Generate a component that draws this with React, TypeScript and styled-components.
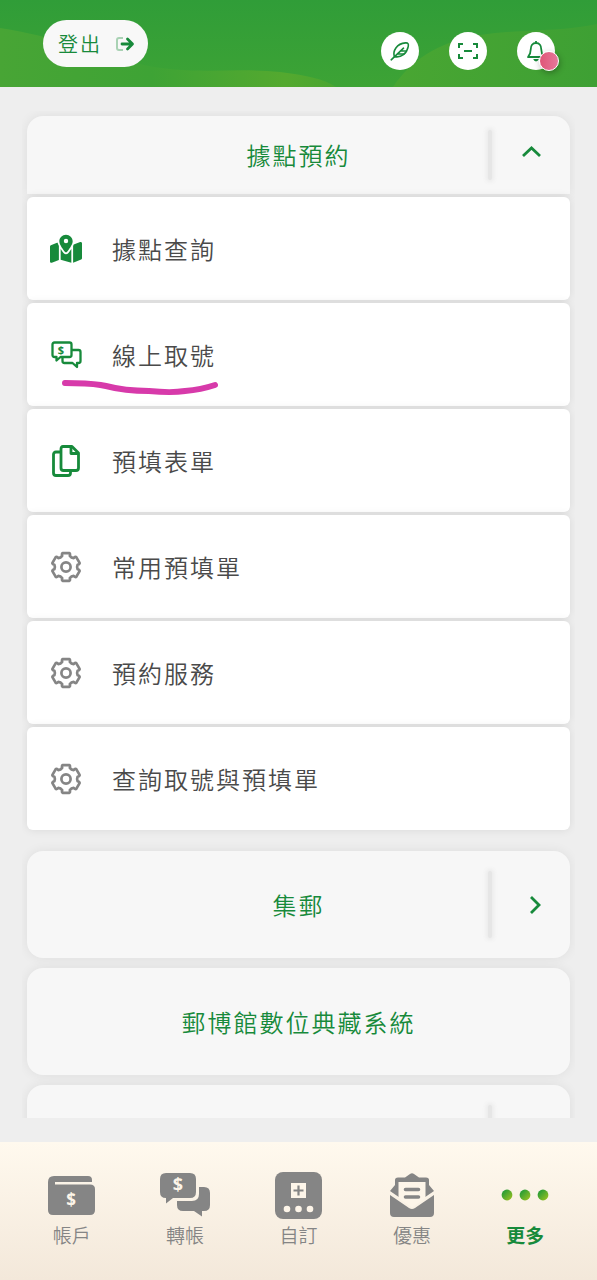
import React from "react";
import styled, { createGlobalStyle } from "styled-components";
import { FaMapLocationDot } from "react-icons/fa6";

const GREEN = "#178a3b";
const GREY = "#858585";
const CREAM = "#fdf5e9";

const GlobalStyle = createGlobalStyle`
  *, *::before, *::after { box-sizing: border-box; }
  body {
    margin: 0;
    background: #eeeeee;
    font-family: "Noto Sans CJK TC", "Noto Sans", sans-serif;
  }
  button { font: inherit; color: inherit; border: 0; padding: 0; cursor: pointer; }
  a { color: inherit; text-decoration: none; }
  ul { list-style: none; margin: 0; padding: 0; }
  svg { display: block; }
`;

const Screen = styled.div`
  display: flex;
  flex-direction: column;
  height: 100vh;
  overflow: hidden;
`;

const TopBar = styled.header`
  position: relative;
  flex: none;
  display: flex;
  justify-content: space-between;
  align-items: flex-start;
  height: 87px;
  padding: 20px 42px 0 43px;
  background: linear-gradient(#309d38, #3da335);
`;

const Waves = styled.svg`
  position: absolute;
  inset: 0;
  width: 100%;
  height: 100%;
`;

const LogoutButton = styled.button`
  position: relative;
  display: flex;
  align-items: center;
  justify-content: space-between;
  width: 105px;
  height: 47px;
  padding: 0 13px 0 15px;
  border-radius: 24px;
  background: #f8f8f8;
  color: ${GREEN};
  font-size: 20px;
  letter-spacing: 2px;
  font-weight: 350;
`;

const ActionGroup = styled.div`
  position: relative;
  display: flex;
  gap: 30px;
  padding-top: 12px;
`;

const RoundButton = styled.button`
  position: relative;
  display: grid;
  place-items: center;
  width: 38px;
  height: 38px;
  border-radius: 50%;
  background: #fff;
`;

const Badge = styled.span`
  position: absolute;
  right: -4px;
  bottom: -1px;
  width: 20px;
  height: 20px;
  border: 1px solid #fff;
  border-radius: 50%;
  background: linear-gradient(90deg, #e05577, #e5789b);
  box-shadow: 1px 2px 6px rgba(0, 0, 0, 0.3);
`;

const MenuArea = styled.main`
  flex: 1;
  min-height: 0;
  margin: 24px 22px;
  padding: 5px;
  overflow: hidden;
`;

const MenuList = styled.div`
  display: flex;
  flex-direction: column;
  gap: 10px;
`;

const Group = styled.section`
  margin-bottom: 11px;
`;

const CategoryCard = styled.button<{ $open?: boolean }>`
  display: grid;
  grid-template-columns: 80px 1fr 80px;
  align-items: center;
  width: 100%;
  height: ${(p) => (p.$open ? 78 : 107)}px;
  padding: ${(p) => (p.$open ? 12 : 18)}px 0;
  border-radius: ${(p) => (p.$open ? "16px 16px 0 0" : "16px")};
  background: #f7f7f7;
  box-shadow: 0 0 12px rgba(0, 0, 0, 0.07);
  color: ${GREEN};
  font-size: 24px;
  line-height: 36px;
  letter-spacing: 2px;
  font-weight: 350;
`;

const CardTitle = styled.span`
  grid-column: 2;
  text-align: center;
`;

const CardToggle = styled.span`
  display: grid;
  grid-template-columns: 6px 1fr;
  align-items: center;
  justify-items: center;
  align-self: stretch;
  margin-left: -3px;

  &::before {
    content: "";
    width: 4px;
    height: calc(100% - 4px);
    border-radius: 2px;
    background: #e6e6e6;
    box-shadow: 0 0 4px 2px #ebebeb;
  }
`;

const RowLink = styled.a`
  display: flex;
  align-items: center;
  gap: 30px;
  height: 103px;
  margin-top: 3px;
  padding: 0 23px;
  position: relative;
  border-radius: 6px;
  background: #fff;
  box-shadow: 0 0 10px rgba(0, 0, 0, 0.09);
  color: #4a4a4a;
  font-size: 24px;
  letter-spacing: 2px;
  font-weight: 350;
`;

const RowIcon = styled.span<{ $muted?: boolean }>`
  flex: none;
  display: grid;
  justify-items: center;
  align-items: center;
  width: 32px;
  color: ${(p) => (p.$muted ? GREY : GREEN)};
`;

const PenMark = styled.svg`
  position: absolute;
  left: 34px;
  bottom: 10px;
  width: 160px;
  height: 18px;
`;

const TabBar = styled.nav`
  flex: none;
  display: flex;
  height: 138px;
  padding: 27px 15px 0;
  background: linear-gradient(#fff9ee, #f3e8da);
`;

const Tab = styled.a<{ $active?: boolean }>`
  flex: 1;
  display: flex;
  flex-direction: column;
  align-items: center;
  color: ${(p) => (p.$active ? GREEN : GREY)};
  font-size: 19px;
  line-height: 28px;
  font-weight: ${(p) => (p.$active ? 700 : 350)};
`;

const TabIcon = styled.span`
  display: grid;
  place-items: center;
  height: 52px;
`;

const IconText = styled.text`
  font-family: "Noto Sans", sans-serif;
  font-weight: 700;
  text-anchor: middle;
`;

function HeaderWaves() {
  return (
    <Waves viewBox="0 0 597 87" preserveAspectRatio="none" aria-hidden="true">
      <defs>
        <linearGradient id="waveLeft" x1="0" y1="0" x2="1" y2="0">
          <stop offset="0" stopColor="#48a535" />
          <stop offset="0.45" stopColor="#3ea335" />
          <stop offset="0.85" stopColor="#54a92f" />
          <stop offset="1" stopColor="#4aa631" />
        </linearGradient>
        <linearGradient id="waveRight" x1="0" y1="0" x2="1" y2="0">
          <stop offset="0" stopColor="#49a632" />
          <stop offset="1" stopColor="#3ea034" />
        </linearGradient>
      </defs>
      <path d="M393 87 C410 62 436 42 480 35 C520 29 560 32 597 24 V87 Z" fill="url(#waveRight)" />
      <path d="M0 28 C50 36 100 52 140 64 C190 76 235 67 280 72 C305 75 325 79 336 87 H0 Z" fill="url(#waveLeft)" />
    </Waves>
  );
}

function LogoutIcon() {
  return (
    <svg width="20" height="16" viewBox="0 0 20 16" fill="none" aria-hidden="true">
      <path d="M8 2 H4 Q2 2 2 4 V12 Q2 14 4 14 H8" stroke="#a9d2b4" strokeWidth="2" />
      <path d="M7 8 H17 M12.5 3 L17.5 8 L12.5 13" stroke={GREEN} strokeWidth="2.8" strokeLinecap="round" strokeLinejoin="round" />
    </svg>
  );
}

function FeatherIcon() {
  return (
    <svg width="20" height="20" viewBox="0 0 20 20" fill="none" stroke={GREEN} strokeWidth="1.6" strokeLinecap="round" strokeLinejoin="round" aria-hidden="true">
      <path d="M4.3 15.6 C2.6 10 6.5 2.6 15.5 1.9 C18 1.7 18.8 2.8 18.2 5.6 C16.8 12.5 11.5 17 4.3 15.6 Z" />
      <path d="M1.2 18.8 L13.5 7.2 M7.4 13 H14 M10.6 10 H16.4" />
    </svg>
  );
}

function ScanIcon() {
  return (
    <svg width="20" height="16" viewBox="0 0 20 16" fill="none" stroke={GREEN} strokeWidth="2" aria-hidden="true">
      <path d="M1 5 V1 H5 M15 1 H19 V5 M19 11 V15 H15 M5 15 H1 V11 M6 8 H14" />
    </svg>
  );
}

function BellIcon() {
  return (
    <svg width="20" height="22" viewBox="0 0 20 22" fill="none" stroke={GREEN} strokeWidth="1.8" strokeLinejoin="round" aria-hidden="true">
      <path d="M10 3 C6.4 3 4.8 5.5 4.8 9 C4.8 13 3.8 14.8 2 17 H18 C16.2 14.8 15.2 13 15.2 9 C15.2 5.5 13.6 3 10 3 Z M10 3 V1" />
      <path d="M7.2 19 H12.8 Q12 21.4 10 21.4 Q8 21.4 7.2 19 Z" fill={GREEN} stroke="none" />
    </svg>
  );
}

function Chevron({ up }: { up?: boolean }) {
  return (
    <svg width="20" height="20" viewBox="0 0 20 20" fill="none" stroke={GREEN} strokeWidth="2.8" aria-hidden="true">
      <path d={up ? "M1 11 L9.5 3 L18 11" : "M9 2 L17 10 L9 18"} />
    </svg>
  );
}

function TicketIcon() {
  return (
    <svg width="31" height="28" viewBox="0 0 31 28" fill="none" stroke="currentColor" strokeWidth="2.3" strokeLinejoin="round" aria-hidden="true">
      <path d="M3.5 1.5 H18.5 Q20.5 1.5 20.5 3.5 V14 Q20.5 16 18.5 16 H9.5 L5.5 19.5 V16 H3.5 Q1.5 16 1.5 14 V3.5 Q1.5 1.5 3.5 1.5 Z" />
      <path d="M21 9 H27.5 Q29.5 9 29.5 11 V20 Q29.5 22 27.5 22 H26 V26 L21.5 22 H13.5 Q11.5 22 11.5 20 V17" />
      <IconText x="11" y="13" fontSize="11" fill="currentColor" stroke="none">$</IconText>
    </svg>
  );
}

function FormsIcon() {
  return (
    <svg width="28" height="32" viewBox="0 0 28 32" fill="none" stroke="currentColor" strokeWidth="2.8" strokeLinejoin="round" aria-hidden="true">
      <path d="M11 1.5 H20 L26.5 8 V23 Q26.5 25.5 24 25.5 H11.5 Q9 25.5 9 23 V4 Q9 1.5 11 1.5 Z" />
      <path d="M19 2 V8.5 H26" />
      <path d="M9 7 H4 Q1.5 7 1.5 9.5 V28 Q1.5 30.5 4 30.5 H16 Q18.5 30.5 18.5 28 V26" />
    </svg>
  );
}

const polar = (radius: number, degrees: number) => {
  const a = (degrees * Math.PI) / 180;
  return `${(16 + radius * Math.sin(a)).toFixed(2)} ${(16 - radius * Math.cos(a)).toFixed(2)}`;
};

/* Six teeth, 60 degrees apart, joined by concave valleys. */
const gearPath =
  [0, 60, 120, 180, 240, 300]
    .map(
      (t, i) =>
        `${i ? "L" : "M"}${polar(11.8, t - 19)} Q${polar(14.2, t - 18)} ${polar(14.2, t - 13)} L${polar(14.2, t + 13)} ` +
        `Q${polar(14.2, t + 18)} ${polar(11.8, t + 19)} Q${polar(10.6, t + 30)} ${polar(11.8, t + 41)}`
    )
    .join(" ") + " Z";

function GearIcon() {
  return (
    <svg width="32" height="32" viewBox="0 0 32 32" fill="none" stroke="currentColor" strokeWidth="2.7" strokeLinejoin="round" aria-hidden="true">
      <path d={gearPath} />
      <circle cx="16" cy="16" r="4.6" />
    </svg>
  );
}

function WalletIcon() {
  return (
    <svg width="47" height="39" viewBox="0 0 47 39" aria-hidden="true">
      <path d="M6 0 H40 Q44 0 44 4 V6 H7 V8.5 H42 Q47 8.5 47 13 V34 Q47 39 42 39 H5 Q0 39 0 34 V6 Q0 0 6 0 Z" fill="currentColor" />
      <IconText x="23" y="30" fontSize="17" fill={CREAM}>$</IconText>
    </svg>
  );
}

function TransferIcon() {
  return (
    <svg width="50" height="44" viewBox="0 0 50 44" fill="currentColor" aria-hidden="true">
      <path d="M6 0 H30 Q36 0 36 6 V19 Q36 25 30 25 H13 L6 30.5 V25 Q0 25 0 19 V6 Q0 0 6 0 Z" />
      <path d="M39 14 H44 Q50 14 50 20 V32 Q50 38 44 38 H42 V43.5 L34 38 H23 Q17 38 17 32 V28 H32 Q39 28 39 21 Z" />
      <IconText x="18" y="18" fontSize="18" fill={CREAM}>$</IconText>
    </svg>
  );
}

function CustomIcon() {
  return (
    <svg width="47" height="47" viewBox="0 0 47 47" aria-hidden="true">
      <rect width="47" height="47" rx="8" fill="currentColor" />
      <rect x="16" y="11" width="15" height="15" fill={CREAM} />
      <path d="M18.5 18.5 H28.5 M23.5 13.5 V23.5" stroke="currentColor" strokeWidth="2.2" />
      <g fill={CREAM}>
        <circle cx="12" cy="37" r="3.3" />
        <circle cx="23.5" cy="37" r="3.3" />
        <circle cx="35" cy="37" r="3.3" />
      </g>
    </svg>
  );
}

function OfferIcon() {
  return (
    <svg width="44" height="44" viewBox="0 0 44 44" fill="currentColor" aria-hidden="true">
      <path d="M0 18 L5 12 V7 Q5 4.5 8 4.5 H15 L20 1 Q22 -0.4 24 1 L29 4.5 H36 Q39 4.5 39 7 V12 L44 18 L22 33 Z" />
      <path d="M8.5 9 H35.5 V25 L22 34.5 L8.5 25 Z" fill={CREAM} />
      <path d="M15.5 16.5 H28.5 M15.5 24 H28.5" stroke="currentColor" strokeWidth="3.6" strokeLinecap="round" />
      <path d="M0 22 L19 35 Q22 37 25 35 L44 22 V40 Q44 44 40 44 H4 Q0 44 0 40 Z" />
    </svg>
  );
}

function MoreIcon() {
  return (
    <svg width="48" height="12" viewBox="0 0 48 12" aria-hidden="true">
      <defs>
        <linearGradient id="dot" x1="0" y1="0" x2="1" y2="1">
          <stop offset="0.1" stopColor="#1f9a37" />
          <stop offset="1" stopColor="#a5c420" />
        </linearGradient>
      </defs>
      <circle cx="6" cy="6" r="5.4" fill="url(#dot)" />
      <circle cx="24" cy="6" r="5.4" fill="url(#dot)" />
      <circle cx="42" cy="6" r="5.4" fill="url(#dot)" />
    </svg>
  );
}

type Row = { label: string; icon: React.ReactNode; muted?: boolean; marked?: boolean };

const rows: Row[] = [
  { label: "據點查詢", icon: <FaMapLocationDot size={32} aria-hidden="true" /> },
  { label: "線上取號", icon: <TicketIcon />, marked: true },
  { label: "預填表單", icon: <FormsIcon /> },
  { label: "常用預填單", icon: <GearIcon />, muted: true },
  { label: "預約服務", icon: <GearIcon />, muted: true },
  { label: "查詢取號與預填單", icon: <GearIcon />, muted: true },
];

const tabs = [
  { label: "帳戶", icon: <WalletIcon /> },
  { label: "轉帳", icon: <TransferIcon /> },
  { label: "自訂", icon: <CustomIcon /> },
  { label: "優惠", icon: <OfferIcon /> },
  { label: "更多", icon: <MoreIcon />, active: true },
];

export default function App() {
  return (
    <Screen>
      <GlobalStyle />
      <TopBar>
        <HeaderWaves />
        <LogoutButton type="button">
          登出
          <LogoutIcon />
        </LogoutButton>
        <ActionGroup>
          <RoundButton type="button" aria-label="簽署">
            <FeatherIcon />
          </RoundButton>
          <RoundButton type="button" aria-label="掃描">
            <ScanIcon />
          </RoundButton>
          <RoundButton type="button" aria-label="通知">
            <BellIcon />
            <Badge />
          </RoundButton>
        </ActionGroup>
      </TopBar>

      <MenuArea>
        <MenuList>
          <Group>
            <CategoryCard type="button" $open aria-expanded="true">
              <CardTitle>據點預約</CardTitle>
              <CardToggle>
                <Chevron up />
              </CardToggle>
            </CategoryCard>
            <ul>
              {rows.map((row) => (
                <li key={row.label}>
                  <RowLink href="#">
                    <RowIcon $muted={row.muted}>{row.icon}</RowIcon>
                    {row.label}
                    {row.marked && (
                      <PenMark viewBox="0 0 160 18" fill="none" aria-hidden="true">
                        <path
                          d="M4 5 C20 5.5 33 5 45 8 C60 12 75 13 88 13 C98 14 112 15 124 13 C136 12 145 10 154 7"
                          stroke="#d73aaa"
                          strokeWidth="6"
                          strokeLinecap="round"
                        />
                      </PenMark>
                    )}
                  </RowLink>
                </li>
              ))}
            </ul>
          </Group>
          <CategoryCard type="button" aria-expanded="false">
            <CardTitle>集郵</CardTitle>
            <CardToggle>
              <Chevron />
            </CardToggle>
          </CategoryCard>
          <CategoryCard type="button">
            <CardTitle>郵博館數位典藏系統</CardTitle>
          </CategoryCard>
          <CategoryCard type="button" aria-label="更多項目">
            <CardTitle />
            <CardToggle />
          </CategoryCard>
        </MenuList>
      </MenuArea>

      <TabBar>
        {tabs.map((tab) => (
          <Tab key={tab.label} href="#" $active={tab.active} aria-current={tab.active ? "page" : undefined}>
            <TabIcon>{tab.icon}</TabIcon>
            {tab.label}
          </Tab>
        ))}
      </TabBar>
    </Screen>
  );
}
